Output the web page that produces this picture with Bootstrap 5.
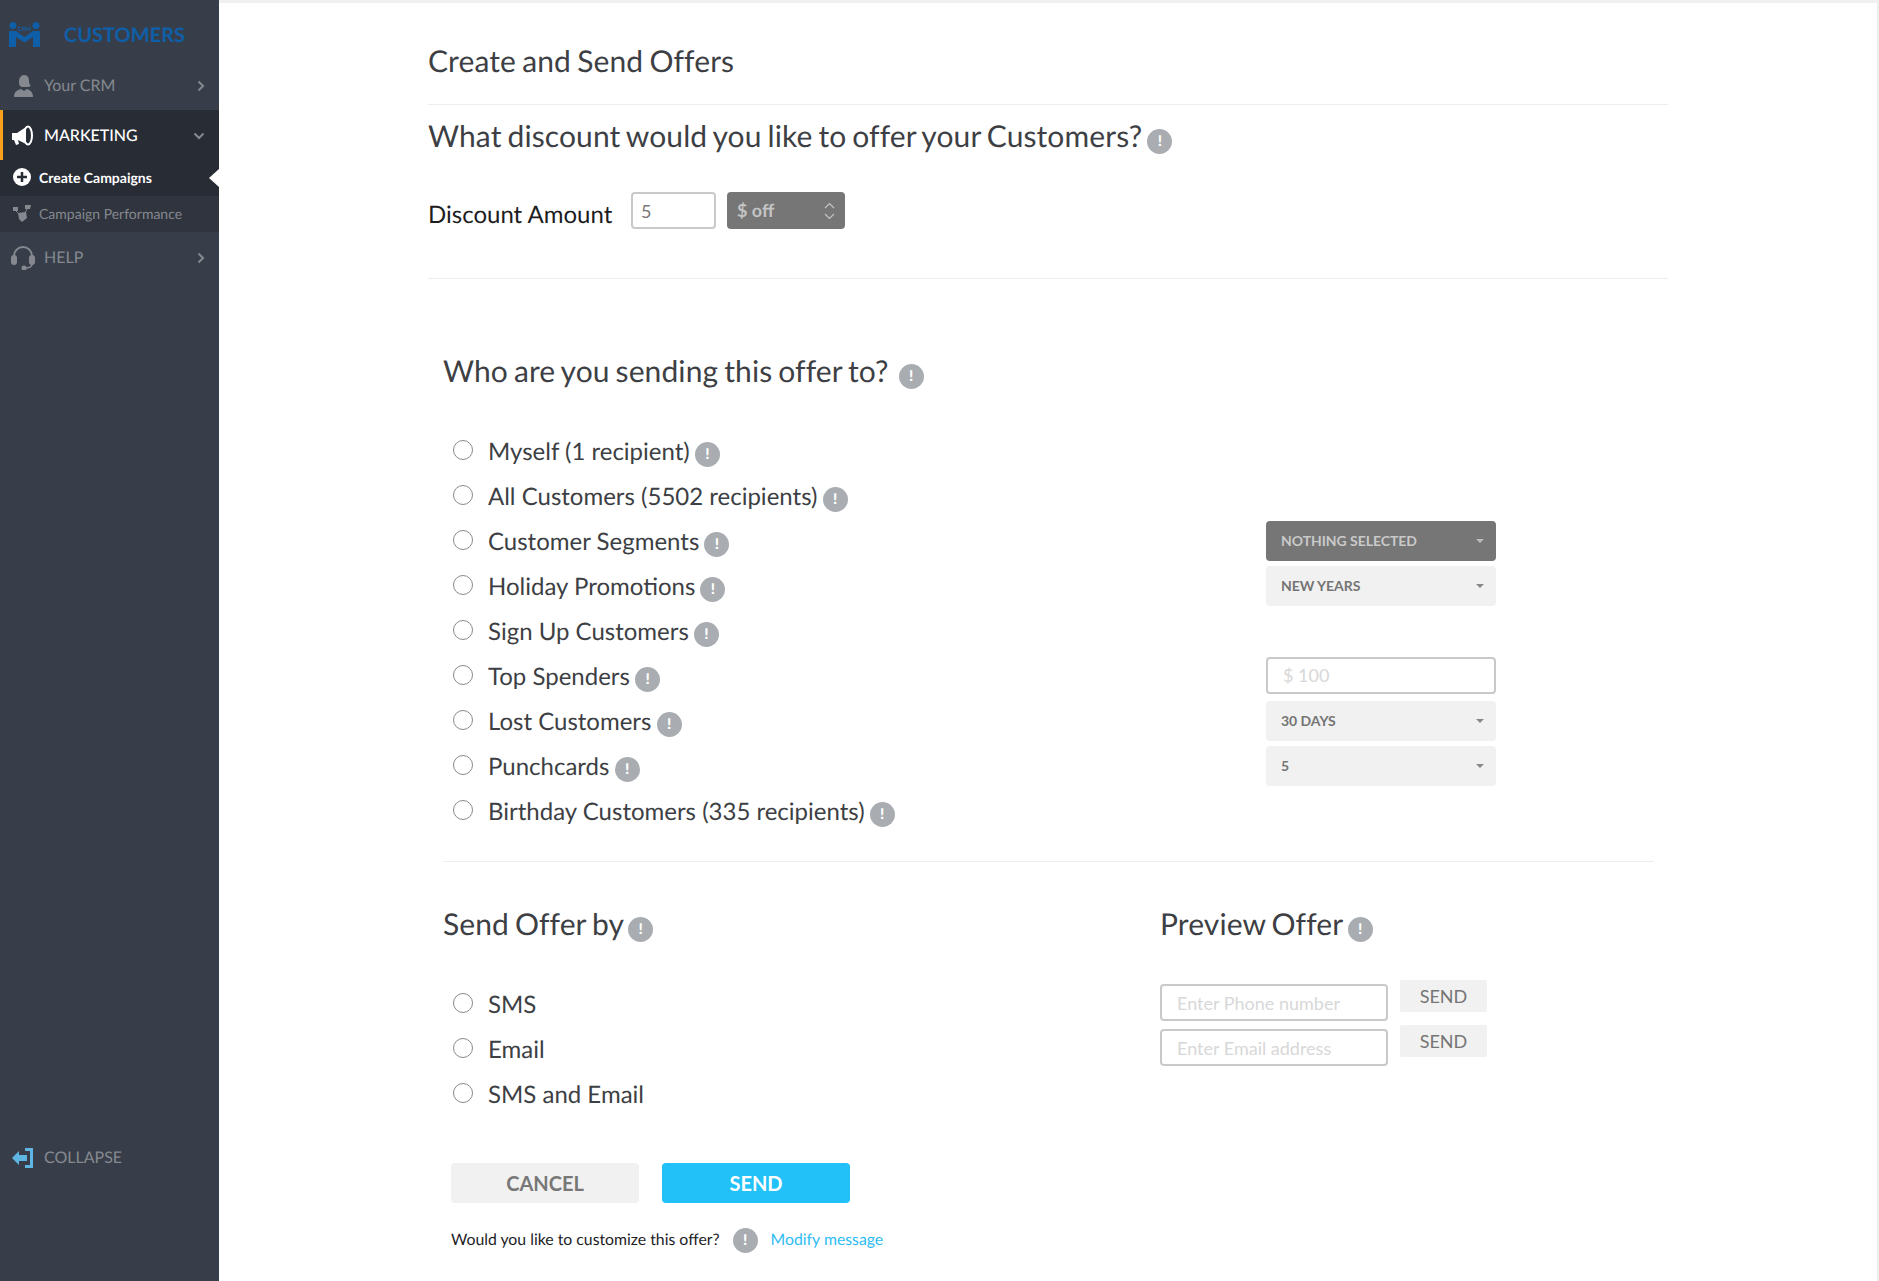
<!doctype html>
<html lang="en">
<head>
<meta charset="utf-8">
<title>Create and Send Offers</title>
<link href="https://cdn.jsdelivr.net/npm/bootstrap@5.3.0/dist/css/bootstrap.min.css" rel="stylesheet">
<style>
html,body{height:100%}
body{font-family:Lato,"Liberation Sans",sans-serif;color:#3d3f44;background:#fff;overflow:hidden;text-rendering:geometricPrecision}
.app-shell{height:1281px}
.side{width:219px;background:#383e49;flex:none;height:100%}
.side-logo{height:68px;padding:1px 0 0 9px;color:#0e5ea8;font-size:20px;font-weight:700;gap:24px}
.side-item{height:42px;padding:1px 14px 0 11px;color:#85898f;font-size:16px}
.side-item svg.ico{width:24px;height:24px;flex:none;margin-right:9px}
.side-active{height:50px;background:#272c35;color:#fff;border-left:3px solid #f9a11b;padding:2px 14px 0 8px;font-size:16px;font-weight:500}
.side-sub{height:36px;padding:0 0 1px 13px;font-size:14px;color:#85898f;background:#2f343e}
.side-sub svg{width:18px;height:18px;flex:none;margin-right:8px}
.side-sub.on{background:#272c35;color:#fff;font-weight:700;font-size:14px;padding-bottom:2px}
.notch{right:0;top:9px;border-top:9px solid transparent;border-bottom:9px solid transparent;border-right:10px solid #fff}
.side-foot{margin-top:auto;margin-bottom:103px;height:42px}
.page-main{padding:0 209px 0 209px;border-top:3px solid #f0f0f0;border-right:2px solid #eee;min-width:0}
.page-title{font-size:30px;font-weight:400;margin:0;height:102px;padding-top:40px;line-height:36px;border-bottom:1px solid #eee;word-spacing:-1.5px;letter-spacing:.1px}
.sec-title{font-size:30px;font-weight:400;margin:0;line-height:36px;color:#3d3f44;word-spacing:-1.8px;letter-spacing:.1px}
.disc-title{padding-top:13px;height:49px}
.info-dot{width:25px;height:25px;background:#a9acb1;color:#fff;font-size:15px;font-weight:900;vertical-align:.5px;line-height:1;margin-left:-1px}
.sec-title .info-dot{vertical-align:1.5px}
.disc-row{height:125px;border-bottom:1px solid #eee;padding-top:38px}
.disc-label{font-size:24px;color:#1d1d1f;width:203px;padding-top:5px}
.field{border:2px solid #c9c9c9;border-radius:4px;font-size:18px;color:#777;padding:0 8px;box-shadow:none}
.field::placeholder{color:#d8d8d8}
.disc-input{width:85px;height:37px;margin-right:11px}
.disc-select{width:118px;height:37px;background:#767676;color:#c4c4c4;border-radius:4px;font-size:18px;font-weight:700;padding:0 10px}
.who{padding:0 14px 0 15px}
.who-title{padding-top:74px;height:150px}
.opt{height:45px;font-size:24px}
.opt .form-check-input{width:20px;height:20px;margin:0 15px 3px 10px;border:1px solid #8a8a8a;flex:none}
.opt-label{width:778px;flex:none}
.opt-ctl{width:230px;flex:none}
.dd{width:230px;height:40px;background:#f1f1f1;color:#757575;border:0;border-radius:4px;font-size:14px;font-weight:700;padding:0 12px 0 15px;margin-bottom:2px;letter-spacing:-.05px}
.dd.dark{background:#767676;color:#c9c9c9}
.caret{border-top:4px solid currentColor;border-left:4px solid transparent;border-right:4px solid transparent;opacity:.85}
.field-wide{width:230px;height:37px;padding-left:15px;font-size:18px;margin-bottom:3px}
.who-rule{margin:27px 0 0;border:0;border-top:1px solid #eee;opacity:1}
.send-grid{padding-top:44px}
.send-left{width:717px;flex:none}
.send-opts{margin-top:40px}
.prev-row{gap:12px;height:45px}
.prev-input{width:228px;height:37px;padding-left:15px;font-size:18px;margin-top:4px}
.prev-btn{width:87px;height:32px;background:#f1f1f1;color:#757575;font-size:18px;padding:0;line-height:32px;border:0;border-radius:2px}
.prev-rows{margin-top:38px}
.act-row{margin:46px 0 0 8px;gap:23px}
.act-btn{width:188px;height:40px;border:0;border-radius:4px;font-size:20px;font-weight:700;padding:0}
.act-cancel{background:#f1f1f1;color:#777}
.act-send{background:#22c1f7;color:#fff}
.cust-row{margin:20px 0 0 8px;font-size:15.8px;color:#1d1d1f;height:34px}
.cust-row .info-dot{margin:0 13px 0 13px;vertical-align:0}
.cust-link{color:#2ebcf3;text-decoration:none}
</style>
</head>
<body>
<div class="app-shell d-flex">
<nav class="side d-flex flex-column">
  <div class="side-logo d-flex align-items-center">
    <svg width="31" height="25" viewBox="0 0 31 25" fill="#0e5ea8"><circle cx="4" cy="3.500" r="3.500"/><circle cx="27" cy="3.500" r="3.500"/><path d="M0 9h7l8.500 6 8.500-6h7v16h-7V15l-8.500 5.500L7 15v10H0z"/><text x="15.500" y="9" font-size="6" text-anchor="middle" font-family="Lato" fill="#0e5ea8">CRM</text></svg>
    <span>CUSTOMERS</span>
  </div>
  <div class="side-item d-flex align-items-center mb-2" style="height:34px">
    <svg class="ico" viewBox="0 0 24 24" fill="#85898f"><path d="M13 1c4 0 5 3 5 6 0 3 1 4 2 5-2 1-4 1-5 1l-3 0c-3 0-4-2-4-5 0-4 2-7 5-7z"/><path d="M3 23c0-5 3-7 7-8l3 2 3-2c3 1 6 3 6 8z"/></svg>
    <span>Your CRM</span>
    <svg class="ms-auto" width="8" height="12" viewBox="0 0 8 12" fill="none" stroke="#85898f" stroke-width="2"><path d="M1.500 1.500 6 6l-4.500 4.500"/></svg>
  </div>
  <div class="side-item side-active d-flex align-items-center">
    <svg class="ico" viewBox="0 0 24 24" fill="#fff"><path d="M1 9h5l9-6v17l-8-4 1 4-3 1-2-5H1z"/><ellipse cx="17" cy="11.500" rx="4" ry="9" fill="none" stroke="#fff" stroke-width="2"/></svg>
    <span>MARKETING</span>
    <svg class="ms-auto" width="12" height="8" viewBox="0 0 12 8" fill="none" stroke="#85898f" stroke-width="2"><path d="M1.500 1.500 6 6l4.500-4.500"/></svg>
  </div>
  <div class="side-sub on d-flex align-items-center position-relative">
    <svg viewBox="0 0 18 18"><circle cx="9" cy="9" r="9" fill="#fff"/><path d="M9 4v10M4 9h10" stroke="#272c35" stroke-width="2.500"/></svg>
    <span>Create Campaigns</span>
    <i class="notch position-absolute"></i>
  </div>
  <div class="side-sub d-flex align-items-center">
    <svg viewBox="0 0 18 18" fill="#85898f"><path d="M0 2l5 0 0 4-5 0zM12 0l6 0-1 4-5 0zM5 8l8-1 1 6-5 4-3-3z"/><path d="M3 6l3 3M14 4l-2 4" stroke="#85898f"/></svg>
    <span>Campaign Performance</span>
  </div>
  <div class="side-item d-flex align-items-center mt-1">
    <svg class="ico" viewBox="0 0 24 24" fill="none" stroke="#85898f" stroke-width="2"><path d="M3 13V10a9 9 0 0 1 18 0v3"/><rect x="1" y="10" width="4" height="8" rx="2" fill="#85898f"/><rect x="19" y="10" width="4" height="8" rx="2" fill="#85898f"/><path d="M21 18c0 3-3 4-7 4" stroke-width="1.500"/><circle cx="13" cy="22" r="1.500" fill="#85898f"/></svg>
    <span>HELP</span>
    <svg class="ms-auto" width="8" height="12" viewBox="0 0 8 12" fill="none" stroke="#85898f" stroke-width="2"><path d="M1.500 1.500 6 6l-4.500 4.500"/></svg>
  </div>
  <div class="side-item side-foot d-flex align-items-center">
    <svg class="ico" viewBox="0 0 24 24" fill="#5fb6e4"><path d="M14 2h8v20h-8v-3h5V5h-5z"/><path d="M1 12l7-7v4h8v6H8v4z"/></svg>
    <span>COLLAPSE</span>
  </div>
</nav>
<main class="page-main flex-grow-1">
  <h1 class="page-title">Create and Send Offers</h1>
  <h2 class="sec-title disc-title">What discount would you like to offer your Customers? <span class="info-dot d-inline-flex align-items-center justify-content-center rounded-circle">!</span></h2>
  <div class="disc-row d-flex align-items-start">
    <div class="disc-label">Discount Amount</div>
    <input class="form-control field disc-input" value="5" aria-label="Discount amount">
    <div class="disc-select d-flex align-items-center justify-content-between">
      <span>$ off</span>
      <svg width="11" height="18" viewBox="0 0 11 18" fill="none" stroke="#c4c4c4" stroke-width="1.200"><path d="M1 6l4.500-4.500L10 6M1 12l4.500 4.500L10 12"/></svg>
    </div>
  </div>
  <section class="who">
    <div class="who-title"><h2 class="sec-title">Who are you sending this offer to? <span class="info-dot d-inline-flex align-items-center justify-content-center rounded-circle ms-1">!</span></h2></div>
    <div class="opt d-flex align-items-center"><input class="form-check-input" type="radio" name="who"><span class="opt-label">Myself (1 recipient) <span class="info-dot d-inline-flex align-items-center justify-content-center rounded-circle">!</span></span></div>
    <div class="opt d-flex align-items-center"><input class="form-check-input" type="radio" name="who"><span class="opt-label">All Customers (5502 recipients) <span class="info-dot d-inline-flex align-items-center justify-content-center rounded-circle">!</span></span></div>
    <div class="opt d-flex align-items-center"><input class="form-check-input" type="radio" name="who"><span class="opt-label">Customer Segments <span class="info-dot d-inline-flex align-items-center justify-content-center rounded-circle">!</span></span>
      <button class="btn dd dark d-flex align-items-center justify-content-between opt-ctl">NOTHING SELECTED<i class="caret"></i></button></div>
    <div class="opt d-flex align-items-center"><input class="form-check-input" type="radio" name="who"><span class="opt-label">Holiday Promotions <span class="info-dot d-inline-flex align-items-center justify-content-center rounded-circle">!</span></span>
      <button class="btn dd d-flex align-items-center justify-content-between opt-ctl">NEW YEARS<i class="caret"></i></button></div>
    <div class="opt d-flex align-items-center"><input class="form-check-input" type="radio" name="who"><span class="opt-label">Sign Up Customers <span class="info-dot d-inline-flex align-items-center justify-content-center rounded-circle">!</span></span></div>
    <div class="opt d-flex align-items-center"><input class="form-check-input" type="radio" name="who"><span class="opt-label">Top Spenders <span class="info-dot d-inline-flex align-items-center justify-content-center rounded-circle">!</span></span>
      <input class="form-control field field-wide opt-ctl" placeholder="$ 100" aria-label="Amount"></div>
    <div class="opt d-flex align-items-center"><input class="form-check-input" type="radio" name="who"><span class="opt-label">Lost Customers <span class="info-dot d-inline-flex align-items-center justify-content-center rounded-circle">!</span></span>
      <button class="btn dd d-flex align-items-center justify-content-between opt-ctl">30 DAYS<i class="caret"></i></button></div>
    <div class="opt d-flex align-items-center"><input class="form-check-input" type="radio" name="who"><span class="opt-label">Punchcards <span class="info-dot d-inline-flex align-items-center justify-content-center rounded-circle">!</span></span>
      <button class="btn dd d-flex align-items-center justify-content-between opt-ctl">5<i class="caret"></i></button></div>
    <div class="opt d-flex align-items-center"><input class="form-check-input" type="radio" name="who"><span class="opt-label">Birthday Customers (335 recipients) <span class="info-dot d-inline-flex align-items-center justify-content-center rounded-circle">!</span></span></div>
    <hr class="who-rule">
    <div class="send-grid d-flex">
      <div class="send-left">
        <h2 class="sec-title">Send Offer by <span class="info-dot d-inline-flex align-items-center justify-content-center rounded-circle">!</span></h2>
        <div class="send-opts">
          <div class="opt d-flex align-items-center"><input class="form-check-input" type="radio" name="by"><span>SMS</span></div>
          <div class="opt d-flex align-items-center"><input class="form-check-input" type="radio" name="by"><span>Email</span></div>
          <div class="opt d-flex align-items-center"><input class="form-check-input" type="radio" name="by"><span>SMS and Email</span></div>
        </div>
      </div>
      <div>
        <h2 class="sec-title">Preview Offer <span class="info-dot d-inline-flex align-items-center justify-content-center rounded-circle">!</span></h2>
        <div class="prev-rows">
          <div class="prev-row d-flex align-items-start"><input class="form-control field prev-input" placeholder="Enter Phone number" aria-label="Phone"><button class="btn prev-btn">SEND</button></div>
          <div class="prev-row d-flex align-items-start"><input class="form-control field prev-input" placeholder="Enter Email address" aria-label="Email"><button class="btn prev-btn">SEND</button></div>
        </div>
      </div>
    </div>
    <div class="act-row d-flex">
      <button class="btn act-btn act-cancel">CANCEL</button>
      <button class="btn act-btn act-send">SEND</button>
    </div>
    <div class="cust-row d-flex align-items-center">Would you like to customize this offer? <span class="info-dot d-inline-flex align-items-center justify-content-center rounded-circle">!</span><a class="cust-link" href="#">Modify message</a></div>
  </section>
</main>
</div>
<script src="https://cdn.jsdelivr.net/npm/bootstrap@5.3.0/dist/js/bootstrap.bundle.min.js"></script>
</body>
</html>
